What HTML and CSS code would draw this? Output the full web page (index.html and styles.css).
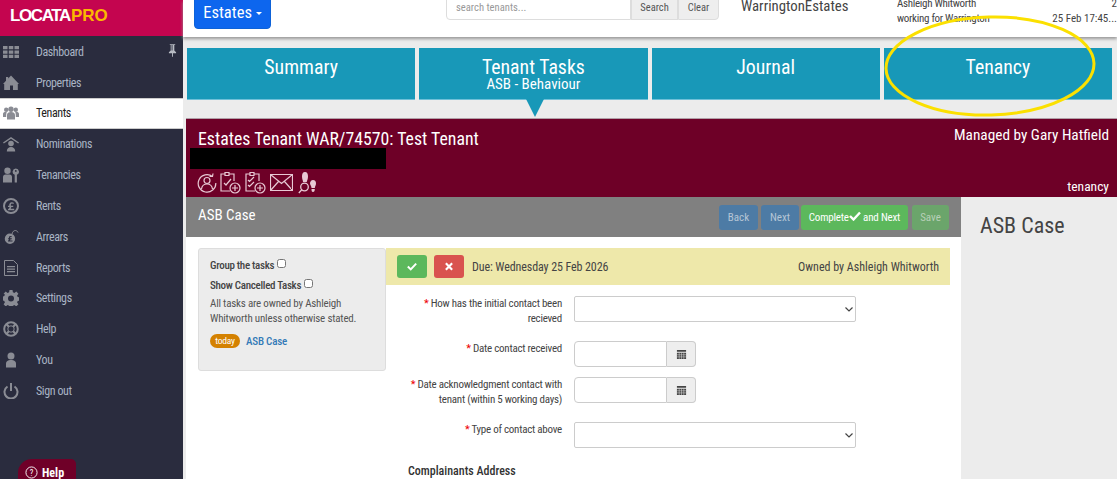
FILE: index.html
```html
<!DOCTYPE html>
<html lang="en">
<head>
    <meta charset="UTF-8">
    <meta name="viewport" content="width=device-width, initial-scale=1.0">
    <title>LocataPro - Tenant Tasks</title>
    <link rel="stylesheet" href="styles.css">
</head>
<body>

<!-- Sidebar -->
<aside class="sidebar">
    <div class="brand"><span class="brand-a">LOCATA</span><span class="brand-b">PRO</span></div>
    <nav class="side-nav">
        <a class="side-item"><svg class="side-icon" viewBox="0 0 16 16"><path d="M0 2h4.500v3.300H0zM5.800 2h4.500v3.300H5.800zM11.500 2H16v3.300h-4.500zM0 6.400h4.500v3.300H0zM5.800 6.400h4.500v3.300H5.800zM11.500 6.400H16v3.300h-4.500zM0 10.800h4.500v3.300H0zM5.800 10.800h4.500v3.300H5.800zM11.500 10.800H16v3.300h-4.500z"/></svg>Dashboard<svg class="pin" viewBox="0 0 10 14"><path d="M2 0h6v1H7v6l2 2v1H5.500v4h-1v-4H1V9l2-2V1H2zM4 1v6h1V1z"/></svg></a>
        <a class="side-item"><svg class="side-icon" viewBox="0 0 16 16"><path d="M8 .500l8 8.500h-1.200v6H10v-4.500H7V15H1.200V9H0l3-3.200V2h2.200v1.500z"/></svg>Properties</a>
        <a class="side-item active"><svg class="side-icon" viewBox="0 0 16 16"><circle cx="3.200" cy="4.800" r="2.200"/><circle cx="12.800" cy="4.800" r="2.200"/><circle cx="8" cy="4.200" r="2.700"/><path d="M0 12V9c0-1.500 1-2 2.500-2h1.300C3.200 8.500 3.200 10 3.200 12zM16 12V9c0-1.500-1-2-2.500-2h-1.300c.6 1.500.6 3 .6 5zM4 14.500V10c0-2 1.500-3 4-3s4 1 4 3v4.500z"/></svg>Tenants</a>
        <a class="side-item"><svg class="side-icon" viewBox="0 0 16 16"><path d="M8 1l8 5.500-.8 1L8 2.800.8 7.500 0 6.500z"/><circle cx="8" cy="7.500" r="2.800"/><path d="M3.800 15.500c0-3 1.700-4.500 4.200-4.500s4.200 1.500 4.200 4.500z"/></svg>Nominations</a>
        <a class="side-item"><svg class="side-icon" viewBox="0 0 16 16"><circle cx="4.500" cy="3.800" r="3.200"/><path d="M0 15.500V10c0-1.500 1-2.500 2.500-2.500h4C8 7.500 9 8.500 9 10v5.500z"/><path fill-rule="evenodd" d="M12.800 1.500a3.200 3.200 0 0 1 1.100 6.200v7.800h-2.200V7.700a3.200 3.200 0 0 1 1.100-6.200zm0 1.500a.9.900 0 1 0 0 1.800.9.900 0 0 0 0-1.800z"/></svg>Tenancies</a>
        <a class="side-item"><svg class="side-icon" viewBox="0 0 16 16"><circle cx="8" cy="8" r="7" class="line thick"/><path d="M5 12.200h6.200v-1.400H7.600c.5-.6.700-1.200.6-1.900h2V7.800H7.900c-.2-.9-.1-2.200 1.100-2.200.6 0 1 .2 1.300.5l.7-1.100C10.400 4.500 9.700 4.200 8.900 4.200c-2.200 0-2.900 1.800-2.600 3.600H5v1.100h1.500c0 .9-.4 1.700-1.500 2.200z"/></svg>Rents</a>
        <a class="side-item"><svg class="side-icon" viewBox="0 0 16 16"><path fill-rule="evenodd" d="M7 4.500a5.200 5.200 0 1 1-.1 10.400A5.200 5.200 0 0 1 7 4.500zM7.500 7C6.300 7 5.700 7.900 6 9.300H5v.9h1c0 .6-.3 1.100-1 1.500v.8h4.500v-1.100H7.100c.3-.4.400-.8.300-1.200h1.400v-.9H7.300C7.100 8.600 7.200 8 7.800 8c.3 0 .6.100.8.300l.4-.8C8.600 7.200 8.100 7 7.500 7z"/><path class="line" d="M9 5c.5-2.500 2-3.500 3.500-3.500 1 0 1.800.7 2.500 2"/></svg>Arrears</a>
        <a class="side-item"><svg class="side-icon" viewBox="0 0 16 16"><path class="line" d="M1.500.500h9l4 4v11h-13z"/><path d="M4 6h8v1.200H4zM4 8.500h8v1.200H4zM4 11h8v1.200H4z"/></svg>Reports</a>
        <a class="side-item"><svg class="side-icon" viewBox="0 0 16 16"><path fill-rule="evenodd" d="M6.500 0h3l.4 2.300 1.500.6 1.900-1.300 2.100 2.100-1.300 1.900.6 1.500 2.300.4v3l-2.300.4-.6 1.500 1.300 1.900-2.100 2.100-1.900-1.300-1.500.6-.4 2.300h-3l-.4-2.300-1.500-.6-1.900 1.300L.6 14.300l1.300-1.900-.6-1.500L0 10.500v-4l1.300-.4.600-1.500L.6 3.700l2.100-2.100 1.900 1.300 1.500-.6zM8 5.500a3 3 0 1 0 0 6 3 3 0 0 0 0-6z"/></svg>Settings</a>
        <a class="side-item"><svg class="side-icon" viewBox="0 0 16 16"><circle cx="8" cy="8" r="6.800" class="line thick"/><circle cx="8" cy="8" r="3.200" class="line"/><path d="M2.500 3.500l1.500-1.500 2.500 3-1.500 1.500zM13.500 3.500L12 2 9.500 5 11 6.500zM2.500 12.500L4 14l2.500-3L5 9.500zM13.500 12.500L12 14l-2.500-3L11 9.500z"/></svg>Help</a>
        <a class="side-item"><svg class="side-icon" viewBox="0 0 16 16"><circle cx="8" cy="4" r="3.500"/><path d="M3 15.500V12c0-3 2-4 5-4s5 1 5 4v3.500z"/></svg>You</a>
        <a class="side-item"><svg class="side-icon" viewBox="0 0 16 16"><path class="line thick" d="M4.500 3.500a6.500 6.500 0 1 0 7 0"/><path d="M7 0h2v8H7z"/></svg>Sign out</a>
    </nav>
    <div class="help-pill"><svg viewBox="0 0 14 14"><circle cx="7" cy="7" r="6"/><text x="7" y="10.500" text-anchor="middle">?</text></svg>Help</div>
</aside>

<!-- Main column -->
<div class="main">
    <header class="topbar">
        <button class="estates-btn">Estates <span class="caret"></span></button>
        <div class="search-group">
            <input class="search-input" type="text" placeholder="search tenants...">
            <button class="search-btn btn-search">Search</button>
            <button class="search-btn btn-clear">Clear</button>
        </div>
        <div class="org-name">WarringtonEstates</div>
        <div class="user-info">Ashleigh Whitworth<br>working for Warrington</div>
        <div class="user-date">2<br>25 Feb 17:45...</div>
    </header>

    <nav class="tabs">
        <a class="tab">Summary</a>
        <a class="tab current">Tenant Tasks<small>ASB - Behaviour</small></a>
        <a class="tab">Journal</a>
        <a class="tab">Tenancy</a>
    </nav>

    <section class="banner">
        <div class="banner-top">
            <h1>Estates Tenant WAR/74570: Test Tenant</h1>
            <div class="manager">Managed by Gary Hatfield</div>
        </div>
        <div class="redacted"></div>
        <div class="banner-bottom">
            <div class="banner-icons">
                <svg width="20" height="20" viewBox="0 0 20 20"><path d="M15.500 3.500A8.800 8.800 0 1 0 18.800 10"/><path d="M12.500 3.500l3 0 .5-3"/><circle cx="10" cy="7.500" r="3"/><path d="M4.500 16c.5-3.500 2.500-5 5.500-5s5 1.500 5.500 5"/></svg>
                <svg width="21" height="23" viewBox="0 0 21 23"><path d="M5 3H1v17h9M14 10V3H9"/><path d="M5 1.500h4V4.500H5zM4 12l2 2 5-6"/><circle cx="15" cy="17" r="5"/><path d="M15 14v6M12 17h6"/></svg>
                <svg class="icon-gap" width="21" height="23" viewBox="0 0 21 23"><path d="M5 3H1v17h9M14 10V3H9"/><path d="M5 1.500h4V4.500H5zM3 9l1.500 1.500L9 6M3 14l1.500 1.500L9 11"/><circle cx="15" cy="17" r="5"/><path d="M15 14v6M12 17h6"/></svg>
                <svg width="23" height="17" viewBox="0 0 23 17"><path d="M.5.500h22v16H.5zM.5.500l11 9 11-9M.5 16.500l8-9M22.500 16.500l-8-9"/></svg>
                <svg width="19" height="22" viewBox="0 0 19 22" class="filled"><path d="M7 0c2.200 0 3 2 3 4.500S9 8.500 8.800 10H5C5 8.500 4 7 4 4.500S4.800 0 7 0zM5.500 11h3.300v.5H5.500zM15 8c2 0 3 1.500 3 3.500S17 14 16.800 16h-3.300c0-2-1.500-3-1.500-4.500S13 8 15 8zM13.500 17h3.300c0 2-.5 3-1.800 3s-1.500-1-1.500-3z"/><circle cx="6.500" cy="15" r="3.800" class="ring"/><path d="M3.800 17.800L.8 21" class="ring"/></svg>
            </div>
            <div class="banner-tag">tenancy</div>
        </div>
    </section>

    <div class="workspace">
        <div class="work-left">
            <div class="action-bar">
                <h2>ASB Case</h2>
                <div class="actions">
                    <button class="btn btn-nav btn-back">Back</button>
                    <button class="btn btn-nav btn-next">Next</button>
                    <button class="btn btn-complete">Complete<svg class="tick" viewBox="0 0 12 10"><path d="M1 5l3.500 3.500L11 1.500"/></svg> and Next</button>
                    <button class="btn btn-save">Save</button>
                </div>
            </div>
            <div class="work-body">
                <div class="task-panel">
                    <label class="task-check">Group the tasks <input type="checkbox"></label>
                    <label class="task-check">Show Cancelled Tasks <input type="checkbox"></label>
                    <p>All tasks are owned by Ashleigh Whitworth unless otherwise stated.</p>
                    <div class="task-row"><span class="badge">today</span><a class="task-link">ASB Case</a></div>
                </div>
                <div class="task-form">
                    <div class="due-bar">
                        <button class="square-btn ok"><svg viewBox="0 0 12 10"><path d="M1 5l3.500 3.500L11 1.500"/></svg></button>
                        <button class="square-btn cancel"><svg viewBox="0 0 10 10"><path d="M1.500 1.500l7 7M8.500 1.500l-7 7"/></svg></button>
                        <span class="due-text">Due: Wednesday 25 Feb 2026</span>
                        <span class="owner-text">Owned by Ashleigh Whitworth</span>
                    </div>
                    <div class="form-row row-a">
                        <label class="form-label"><span class="req">*</span> How has the initial contact been recieved</label>
                        <select class="select"></select>
                    </div>
                    <div class="form-row row-b">
                        <label class="form-label"><span class="req">*</span> Date contact received</label>
                        <div class="date-group">
                            <input class="date-input" type="text">
                            <span class="date-addon"><svg viewBox="0 0 12 12"><path d="M1 1h10v2H1zM1 4h10v7H1z"/><path class="cal-grid" d="M3.500 4v7M6 4v7M8.500 4v7M1 6.300h10M1 8.600h10"/></svg></span>
                        </div>
                    </div>
                    <div class="form-row row-c">
                        <label class="form-label"><span class="req">*</span> Date acknowledgment contact with tenant (within 5 working days)</label>
                        <div class="date-group">
                            <input class="date-input" type="text">
                            <span class="date-addon"><svg viewBox="0 0 12 12"><path d="M1 1h10v2H1zM1 4h10v7H1z"/><path class="cal-grid" d="M3.500 4v7M6 4v7M8.500 4v7M1 6.300h10M1 8.600h10"/></svg></span>
                        </div>
                    </div>
                    <div class="form-row row-d">
                        <label class="form-label"><span class="req">*</span> Type of contact above</label>
                        <select class="select"></select>
                    </div>
                    <h3>Complainants Address</h3>
                </div>
            </div>
        </div>
        <div class="work-right">ASB Case</div>
    </div>
</div>

<!-- Hand drawn highlight over the Tenancy tab -->
<svg class="highlight" width="216" height="106" viewBox="0 0 216 106"><ellipse cx="108" cy="53" rx="104" ry="49" transform="rotate(-1.500 108 53)"/></svg>

</body>
</html>
```

FILE: styles.css
```css
html, body {
    height: 100%;
}

body {
    margin: 0;
    display: flex;
    height: 479px;
    overflow: hidden;
    position: relative;
    background-color: #fff;
    color: #444;
    font-family: Roboto, "Noto Sans", sans-serif;
    font-stretch: 75%;
    font-size: 12px;
}

button, input, select {
    font-family: inherit;
    font-stretch: inherit;
}

/* Sidebar */
.sidebar {
    flex: 0 0 183px;
    position: relative;
    background-color: #2a2c3e;
}

.brand {
    height: 36px;
    background-color: #c4054f;
    padding-left: 10px;
    font-family: "Liberation Sans", sans-serif;
    font-stretch: normal;
    font-size: 17px;
    font-weight: 700;
    line-height: 31px;
}

.brand-a {
    color: #fff;
    letter-spacing: -1.4px;
}

.brand-b {
    color: #fbb800;
    margin-left: 1px;
}

.side-nav {
    display: flex;
    flex-direction: column;
}

.side-item {
    display: flex;
    align-items: center;
    position: relative;
    height: 30.85px;
    box-sizing: border-box;
    padding-top: 0.5px;
    color: #a9b4c4;
    font-size: 12px;
    letter-spacing: -0.4px;
}

.side-item.active {
    background-color: #fff;
    color: #222;
    border-top: 1px solid #ccc;
    border-bottom: 1px solid #ccc;
}

.side-icon {
    flex: 0 0 auto;
    width: 16px;
    height: 16px;
    margin: 0 17px 0 3px;
    fill: #8a8c94;
}

.side-icon .line {
    fill: none;
    stroke: #8a8c94;
}

.side-icon .thick {
    stroke-width: 2;
}

.pin {
    position: absolute;
    top: 8px;
    right: 6px;
    width: 9px;
    height: 13px;
    fill: #b8bcc4;
}

.help-pill {
    position: absolute;
    left: 18px;
    bottom: -6px;
    width: 58px;
    height: 26px;
    box-sizing: border-box;
    padding: 7px 0 0 7px;
    display: flex;
    align-items: flex-start;
    gap: 4px;
    border-radius: 14px 5px 0 0;
    background-color: #6f0028;
    color: #fff;
    font-size: 12px;
    font-weight: 700;
    line-height: 14px;
}

.help-pill svg {
    width: 13px;
    height: 13px;
}

.help-pill circle {
    fill: none;
    stroke: #fff;
}

.help-pill text {
    fill: #fff;
    font-size: 9px;
    font-weight: 400;
}

/* Main column */
.main {
    flex: 1;
    min-width: 0;
    display: flex;
    flex-direction: column;
    background-color: #ececec;
}

.topbar {
    position: relative;
    flex: 0 0 37px;
    display: flex;
    align-items: flex-end;
    overflow: hidden;
    box-sizing: border-box;
    padding-bottom: 8px;
    background-color: #fff;
    box-shadow: 0 2px 3px #999;
}

.estates-btn {
    margin-left: 11px;
    width: 77px;
    height: 34px;
    padding: 0;
    border: 1px solid #0d62d8;
    border-radius: 4px;
    background-color: #0d66ee;
    color: #fff;
    font-size: 16.5px;
}

.caret {
    display: inline-block;
    vertical-align: middle;
    border-top: 3px solid #fff;
    border-left: 3px solid transparent;
    border-right: 3px solid transparent;
}

.search-group {
    display: flex;
    margin: 0 0 9px 175px;
}

.search-input {
    width: 185px;
    height: 25px;
    box-sizing: border-box;
    padding: 0 9px;
    border: 1px solid #ddd;
    border-radius: 4px 0 0 4px;
    font-size: 10.6px;
}

.search-input::placeholder {
    color: #999;
}

.search-btn {
    height: 25px;
    padding: 0;
    border: 1px solid #ddd;
    background-color: #eee;
    color: #555;
    font-size: 10.5px;
}

.btn-search {
    width: 47px;
}

.btn-clear {
    width: 41px;
    border-radius: 0 4px 4px 0;
}

.org-name {
    position: absolute;
    left: 558px;
    top: -2px;
    font-size: 14.8px;
    line-height: 16px;
    color: #444;
}

.user-info {
    position: absolute;
    left: 714px;
    top: -4px;
    font-size: 11px;
    letter-spacing: -0.3px;
    line-height: 15px;
}

.user-date {
    position: absolute;
    right: 0;
    width: 78px;
    top: -4px;
    text-align: right;
    font-size: 11px;
    line-height: 15px;
}

/* Tabs */
.tabs {
    display: flex;
    gap: 4px;
    margin: 11px 5px 0 4px;
    height: 52px;
}

.tab {
    flex: 1;
    position: relative;
    box-sizing: border-box;
    padding-top: 10px;
    border-bottom: 1px solid #6fc0d8;
    background-color: #1898b8;
    color: #fff;
    text-align: center;
    font-size: 19.8px;
    line-height: 20px;
}

.tab small {
    display: block;
    font-size: 15px;
    line-height: 12px;
}

.tab.current::after {
    content: "";
    position: absolute;
    left: 107px;
    top: 100%;
    border-top: 18px solid #1898b8;
    border-left: 9px solid transparent;
    border-right: 9px solid transparent;
}

/* Maroon banner */
.banner {
    margin: 18px 0 0 3px;
    height: 79px;
    box-sizing: border-box;
    display: flex;
    flex-direction: column;
    background-color: #6e0027;
    border-top: 1px solid #b0a0a8;
    color: #fff;
}

.banner-top {
    display: flex;
    justify-content: space-between;
    padding: 11px 8px 0 12px;
}

.banner h1 {
    margin: 0;
    font-size: 17.8px;
    font-weight: 400;
    line-height: 18px;
}

.manager {
    margin-top: -3px;
    font-size: 15.3px;
    line-height: 16px;
}

.redacted {
    width: 196px;
    height: 21px;
    margin: 0 0 0 4px;
    background-color: #000;
}

.banner-bottom {
    display: flex;
    justify-content: space-between;
    align-items: flex-end;
    padding: 0 8px 0 11px;
    flex: 1;
}

.banner-icons {
    display: flex;
    align-items: center;
    gap: 3px;
    padding-bottom: 3px;
}

.banner-icons svg {
    fill: none;
    stroke: #e8c8d4;
    stroke-width: 1.200;
}

.banner-icons svg.icon-gap {
    margin: 0 1px;
}

.banner-icons svg.filled {
    fill: #e8c8d4;
    stroke: none;
    margin-left: 2px;
}

.banner-icons .ring {
    fill: #6e0027;
    stroke: #e8c8d4;
    stroke-width: 1.300;
}

.banner-tag {
    padding-bottom: 3px;
    font-size: 13.5px;
    line-height: 16px;
}

/* Workspace */
.workspace {
    flex: 1;
    display: flex;
    margin-left: 3px;
    min-height: 0;
}

.work-left {
    flex: 0 0 775px;
    display: flex;
    flex-direction: column;
    background-color: #fff;
}

.work-right {
    flex: 1;
    padding: 17px 19px;
    background-color: #ececec;
    font-size: 22px;
    line-height: 24px;
    color: #444;
}

.action-bar {
    display: flex;
    justify-content: space-between;
    align-items: center;
    height: 40px;
    box-sizing: border-box;
    padding: 0 12px 0 12px;
    background-color: #808080;
}

.action-bar h2 {
    margin: 0 0 5px;
    color: #fff;
    font-size: 15px;
    font-weight: 400;
}

.actions {
    display: flex;
    gap: 2px;
}

.btn {
    height: 25px;
    padding: 0;
    border: 0;
    border-radius: 3px;
    font-size: 11px;
    color: #fff;
}

.btn-nav {
    background-color: #4d7ba5;
    color: #b6c6d6;
}

.btn-back {
    width: 39px;
    margin-right: 1px;
}

.btn-next {
    width: 38px;
}

.btn-complete {
    width: 107px;
    background-color: #5cb85c;
    letter-spacing: -0.2px;
}

.btn-save {
    width: 37px;
    margin-left: 2px;
    background-color: #6ba56b;
    color: #b8d0b8;
}

.tick {
    width: 12px;
    height: 10px;
    fill: none;
    stroke: #fff;
    stroke-width: 2.400;
}

.work-body {
    flex: 1;
    display: flex;
    padding: 11px 11px 0 12px;
    min-height: 0;
}

/* Left task panel */
.task-panel {
    flex: 0 0 188px;
    height: 123px;
    box-sizing: border-box;
    padding: 7px 11px;
    border: 1px solid #ddd;
    border-radius: 3px;
    background-color: #ececec;
    color: #555;
    font-size: 11px;
    letter-spacing: -0.2px;
}

.task-check {
    display: block;
    font-weight: 500;
    line-height: 20px;
    letter-spacing: -0.3px;
    color: #444;
}

.task-check input {
    margin: 0 0 0 1px;
    width: 9px;
    height: 9px;
    vertical-align: 1px;
}

.task-panel p {
    margin: 0;
    line-height: 15px;
}

.task-row {
    display: flex;
    align-items: center;
    gap: 6px;
    margin-top: 8px;
}

.badge {
    width: 30px;
    height: 14px;
    border-radius: 7px;
    background-color: #d48100;
    color: #fff;
    text-align: center;
    font-size: 9.5px;
    line-height: 14px;
}

.task-link {
    color: #337ab7;
    font-weight: 500;
}

/* Form */
.task-form {
    flex: 1;
    min-width: 0;
}

.due-bar {
    display: flex;
    align-items: center;
    height: 37px;
    box-sizing: border-box;
    padding: 0 11px;
    background-color: #eee8aa;
    color: #444;
}

.square-btn {
    display: flex;
    align-items: center;
    justify-content: center;
    width: 30px;
    height: 23px;
    padding: 0;
    margin-right: 7px;
    border: 0;
    border-radius: 3px;
}

.square-btn svg {
    width: 10px;
    height: 9px;
    fill: none;
    stroke: #fff;
    stroke-width: 2.400;
}

.ok {
    background-color: #5cb85c;
}

.cancel {
    background-color: #d9534f;
}

.due-text {
    margin-left: 1px;
    letter-spacing: -0.1px;
}

.owner-text {
    margin-left: auto;
}

.form-row {
    display: flex;
    align-items: flex-start;
    gap: 12px;
}

.row-a {
    margin-top: 11px;
}

.row-b {
    margin-top: 15px;
}

.row-c {
    margin-top: 10px;
}

.row-d {
    margin-top: 15px;
}

.form-label {
    flex: 0 0 176px;
    box-sizing: border-box;
    padding-left: 16px;
    text-align: right;
    font-size: 11px;
    letter-spacing: -0.25px;
    line-height: 15px;
    color: #444;
}

.req {
    color: #e00;
}

.select {
    appearance: none;
    width: 282px;
    height: 26px;
    border: 1px solid #ccc;
    border-radius: 2px;
    background: #fff url("data:image/svg+xml,%3Csvg xmlns='http://www.w3.org/2000/svg' width='8' height='5'%3E%3Cpath d='M.5.500L4 4 7.500.500' fill='none' stroke='%23444' stroke-width='1.200'/%3E%3C/svg%3E") no-repeat right 2px center;
}

.date-group {
    display: flex;
    height: 26px;
}

.date-input {
    width: 93px;
    box-sizing: border-box;
    border: 1px solid #ccc;
    border-radius: 4px 0 0 4px;
}

.date-addon {
    display: flex;
    align-items: center;
    justify-content: center;
    width: 29px;
    box-sizing: border-box;
    border: 1px solid #ccc;
    border-left: 0;
    border-radius: 0 4px 4px 0;
    background-color: #eee;
}

.date-addon svg {
    width: 11px;
    height: 11px;
    fill: #444;
}

.cal-grid {
    fill: none;
    stroke: #eee;
    stroke-width: 0.500;
}

.task-form h3 {
    margin: 16px 0 0 22px;
    font-size: 12px;
    font-weight: 500;
    line-height: 15px;
    color: #333;
}

/* Yellow ring */
.highlight {
    position: absolute;
    left: 882px;
    top: 13px;
    fill: none;
    stroke: #fbe000;
    stroke-width: 3;
}
```
